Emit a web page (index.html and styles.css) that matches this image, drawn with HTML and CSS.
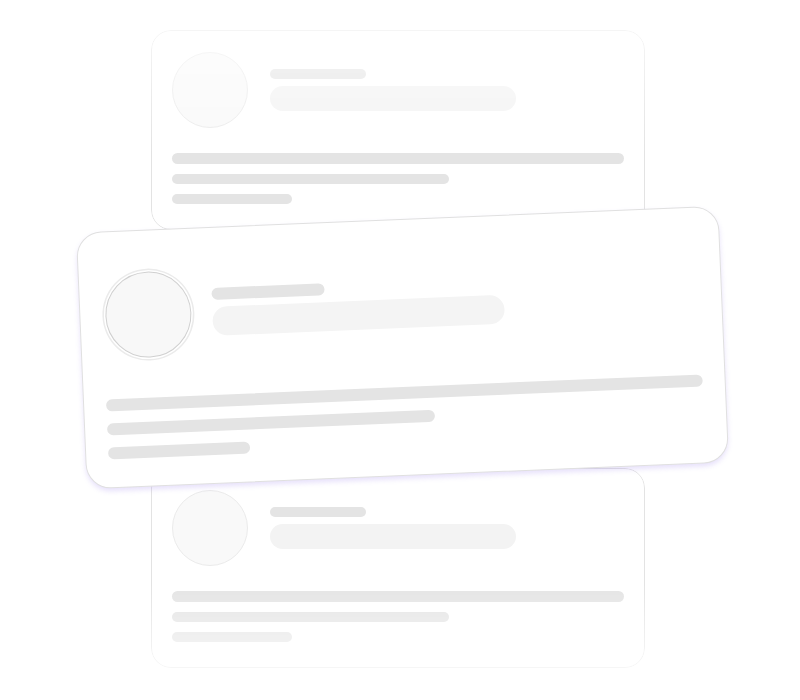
FILE: index.html
```html
<!DOCTYPE html>
<html lang="en">
<head>
<meta charset="utf-8">
<title>Skeleton cards</title>
<link rel="stylesheet" href="styles.css">
</head>
<body>
<div class="stage">
  <div class="card side side-top">
    <div class="head">
      <div class="avatar"></div>
      <div class="bars">
        <div class="bar-sm"></div>
        <div class="bar-lg"></div>
      </div>
    </div>
    <div class="line l1"></div>
    <div class="line l2"></div>
    <div class="line l3"></div>
  </div>

  <div class="card main">
    <div class="head">
      <div class="avatar"></div>
      <div class="bars">
        <div class="bar-sm"></div>
        <div class="bar-lg"></div>
      </div>
    </div>
    <div class="line l1"></div>
    <div class="line l2"></div>
    <div class="line l3"></div>
  </div>

  <div class="card side side-bottom">
    <div class="head">
      <div class="avatar"></div>
      <div class="bars">
        <div class="bar-sm"></div>
        <div class="bar-lg"></div>
      </div>
    </div>
    <div class="line l1"></div>
    <div class="line l2"></div>
    <div class="line l3"></div>
  </div>
</div>
</body>
</html>
```

FILE: styles.css
```css
* { box-sizing: border-box; }

html, body {
  margin: 0;
  padding: 0;
  background: #ffffff;
  font-family: "Liberation Sans", Arial, sans-serif;
}

.stage {
  width: 800px;
  height: 700px;
  padding-top: 30px;
  display: flex;
  flex-direction: column;
  align-items: flex-start;
  overflow: hidden;
}

.card {
  background: #ffffff;
  display: flex;
  flex-direction: column;
  align-items: flex-start;
}

.head {
  display: flex;
  align-items: center;
}

.bars {
  display: flex;
  flex-direction: column;
}

.line,
.bar-sm,
.bar-lg {
  border-radius: 999px;
}

/* ---------- side (faded) cards ---------- */
.side {
  width: 494px;
  height: 200px;
  margin-left: 151px;
  border: 1px solid #e3e3e3;
  border-radius: 20px;
  padding: 20.7px 20px 0 20px;
}

.side .avatar {
  width: 76px;
  height: 76px;
  border-radius: 50%;
  background: #f9f9f9;
  border: 1px solid #ebebeb;
}

.side .bars {
  margin-left: 22px;
}

.side .bar-sm {
  width: 96px;
  height: 10px;
  background: #e4e4e4;
  margin-bottom: 6.7px;
}

.side .bar-lg {
  width: 246px;
  height: 25px;
  background: #f3f3f3;
}

.side .line {
  height: 10.4px;
  background: #e4e4e4;
}

.side .l1 { width: 100%; margin-top: 25.6px; }
.side .l2 { width: 277px; margin-top: 10px; }
.side .l3 { width: 120px; margin-top: 10px; }

.side-top {
  -webkit-mask-image: linear-gradient(to bottom, rgba(0,0,0,0.35) 0%, #000 62%);
  mask-image: linear-gradient(to bottom, rgba(0,0,0,0.35) 0%, #000 62%);
}

.side-bottom {
  -webkit-mask-image: linear-gradient(to bottom, #000 58%, rgba(0,0,0,0.3) 100%);
  mask-image: linear-gradient(to bottom, #000 58%, rgba(0,0,0,0.3) 100%);
}

/* ---------- main (tilted) card ---------- */
.main {
  position: relative;
  z-index: 2;
  width: 643px;
  height: 257px;
  margin-left: 81px;
  margin-top: -11.5px;
  margin-bottom: -7.5px;
  border: 1.5px solid #e0e0e0;
  border-radius: 25px;
  padding: 41px 22px 0 22px;
  transform: rotate(-2.4deg);
  box-shadow: 0 3px 5px rgba(150, 125, 235, 0.22);
}

.main .avatar {
  width: 86px;
  height: 86px;
  margin-left: 2.5px;
  border-radius: 50%;
  background: #f8f8f8;
  border: 1.5px solid #d0d0d0;
  box-shadow: 0 0 0 1.5px #ffffff, 0 0 0 3px #ebebeb;
}

.main .bars {
  margin-left: 21px;
}

.main .bar-sm {
  width: 113px;
  height: 12px;
  background: #e4e4e4;
  margin-bottom: 7px;
}

.main .bar-lg {
  width: 292px;
  height: 29.5px;
  background: #f4f4f4;
}

.main .line {
  height: 12px;
  background: #e4e4e4;
}

.main .l1 { width: 100%; margin-top: 39.5px; }
.main .l2 { width: 328px; margin-top: 12px; }
.main .l3 { width: 142px; margin-top: 12px; }
```
